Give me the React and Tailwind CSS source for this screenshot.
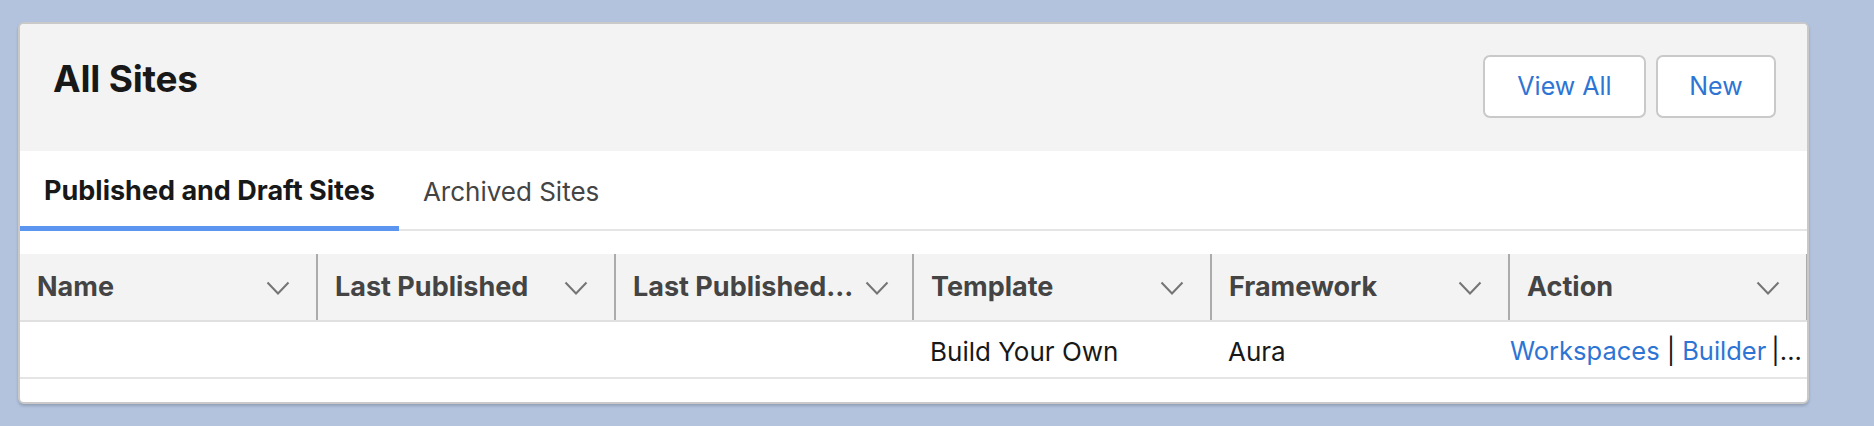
import React from 'react';

const font = { fontFamily: 'Inter, "Liberation Sans", sans-serif' };

const columns = ['Name', 'Last Published', 'Last Published...', 'Template', 'Framework', 'Action'];

function Chevron() {
  return (
    <svg width="24" height="14" viewBox="0 0 24 14" className="shrink-0">
      <polyline points="1.5,1.5 12,12.5 22.5,1.5" fill="none" stroke="#747474" strokeWidth="2" />
    </svg>
  );
}

export default function App() {
  return (
    <div className="h-[426px] bg-[#b3c3de] pt-[22px] pl-[18px]" style={font}>
      <div className="w-[1791px] h-[382px] bg-white border-2 border-[#c9c9c9] rounded-[6px] overflow-hidden shadow-[0_2px_3px_rgba(0,0,0,0.18)]">
        {/* Header */}
        <div className="h-[127px] bg-[#f3f3f3] flex items-start justify-between pt-[31px] pl-[33px] pr-[31px]">
          <h1 className="mt-[5px] text-[37px] leading-none font-bold text-[#181818] tracking-[-0.2px]">All Sites</h1>
          <div className="flex gap-[10px]">
            <button className="w-[163px] h-[63px] bg-white border-2 border-[#c9c9c9] rounded-[7px] text-[25px] text-[#2e74d4]">
              View All
            </button>
            <button className="w-[120px] h-[63px] bg-white border-2 border-[#c9c9c9] rounded-[7px] text-[25px] text-[#2e74d4]">
              New
            </button>
          </div>
        </div>

        {/* Tabs */}
        <div className="h-[80px] flex border-b-2 border-[#e5e5e5]">
          <div className="relative px-[24px] pt-[2px] flex items-center text-[27px] font-bold text-[#181818]">
            Published and Draft Sites
            <span className="absolute left-0 right-0 -bottom-[2px] h-[5px] bg-[#5b95f0]" />
          </div>
          <div className="px-[24px] pt-[2px] flex items-center text-[26px] text-[#444444]">Archived Sites</div>
        </div>

        {/* Table */}
        <div className="mt-[23px]">
          <div className="grid grid-cols-[repeat(6,298px)] h-[68px] bg-[#f3f3f3] border-b-2 border-[#e0e0e0]">
            {columns.map((c) => (
              <div key={c} className="flex items-center justify-between pl-[17px] pr-[26px] pt-[1px] border-r-2 border-[#ababab] gap-3">
                <span className="text-[27px] font-bold text-[#444444] whitespace-nowrap">{c}</span>
                <Chevron />
              </div>
            ))}
          </div>
          <div className="grid grid-cols-[repeat(6,298px)] h-[57px] border-b-2 border-[#e5e5e5] text-[26px] text-[#181818]">
            <div />
            <div />
            <div />
            <div className="flex items-center pl-[16px] pt-[3px]">Build Your Own</div>
            <div className="flex items-center pl-[16px] pt-[3px]">Aura</div>
            <div className="flex items-center pt-[3px] whitespace-nowrap text-[25.5px]">
              <span className="text-[#2e74d4]">Workspaces</span>
              <span className="mx-[7px]">|</span>
              <span className="text-[#2e74d4]">Builder</span>
              <span className="ml-[5px]">|...</span>
            </div>
          </div>
        </div>
      </div>
    </div>
  );
}
